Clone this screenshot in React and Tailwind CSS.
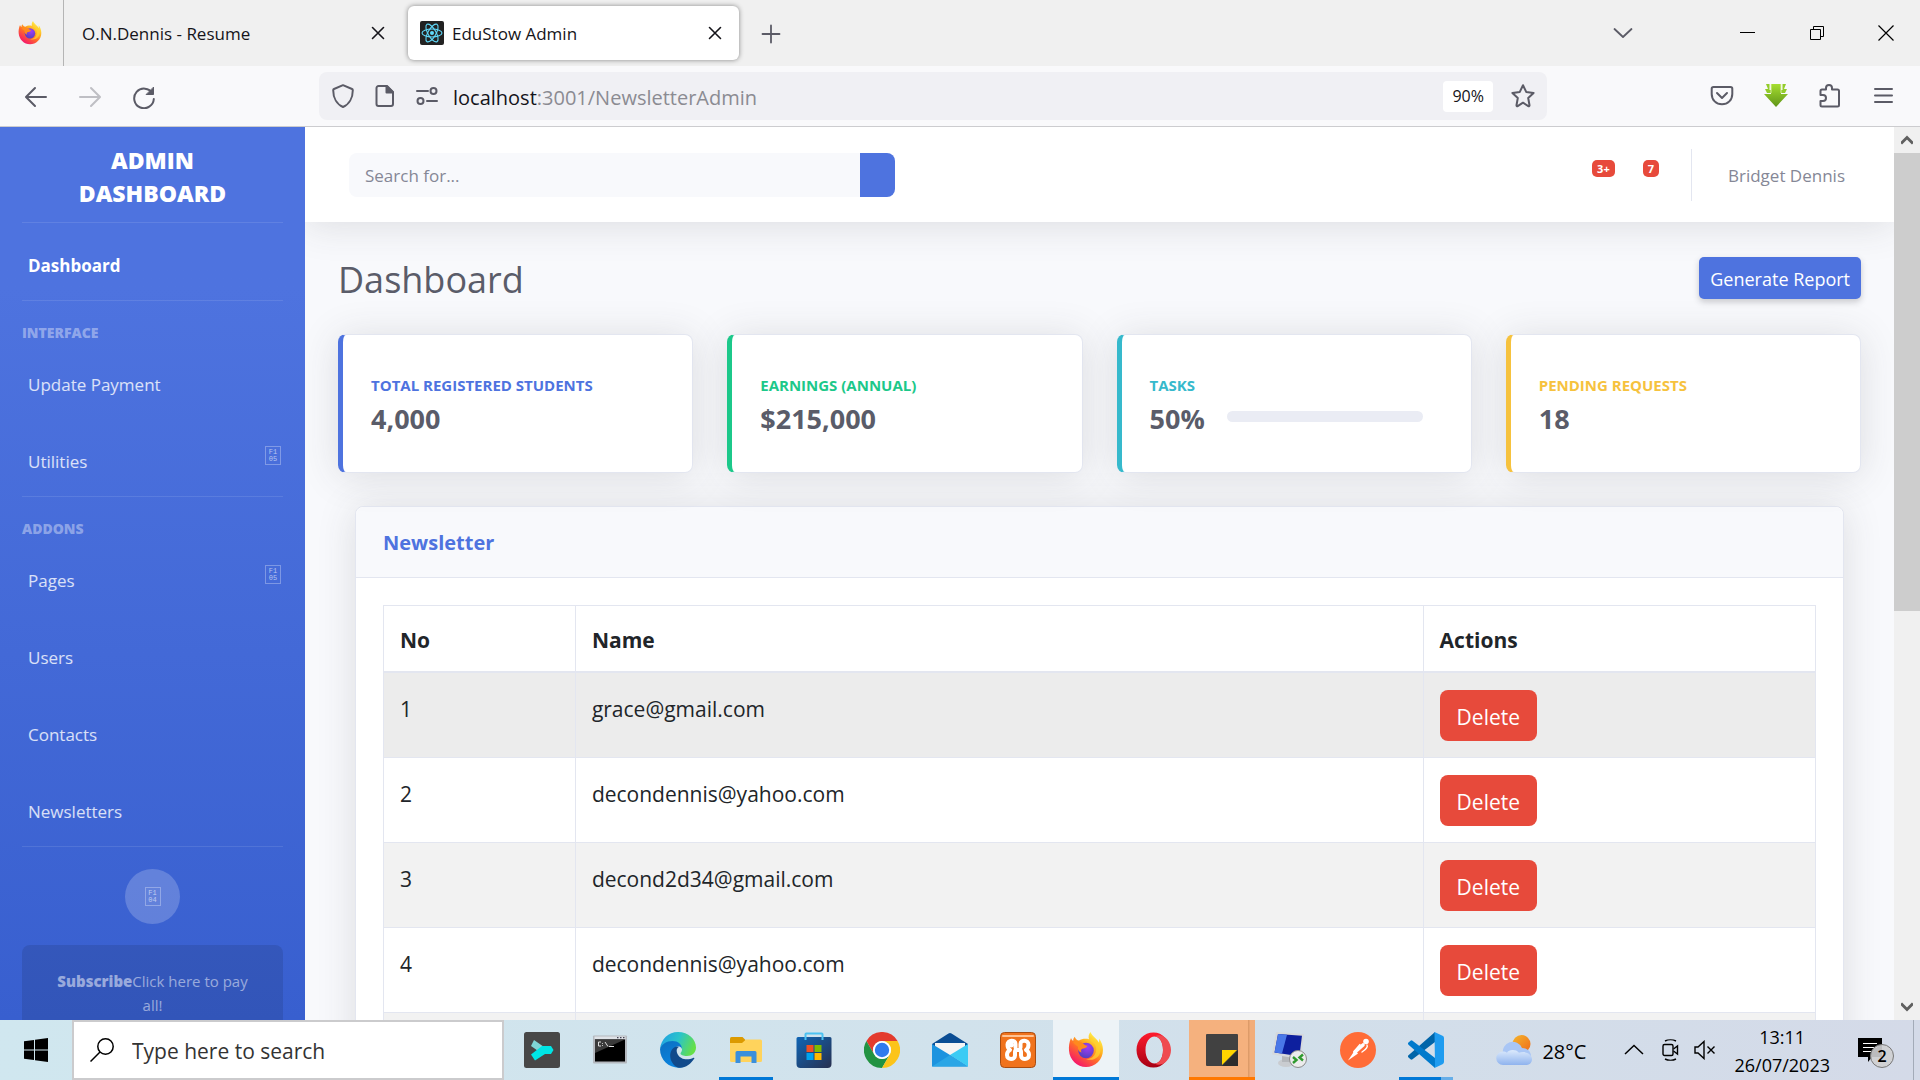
import React from "react";

/* ---------- Browser chrome icons ---------- */

function Stroke({ size = "size-6", width = 2, children, box = "0 0 24 24" }) {
  return (
    <svg viewBox={box} className={`${size} shrink-0`} fill="none" stroke="currentColor" strokeWidth={width} strokeLinecap="round" strokeLinejoin="round" aria-hidden="true">
      {children}
    </svg>
  );
}

function FirefoxLogo({ id, className }) {
  return (
    <svg viewBox="0 0 36 36" className={className} aria-hidden="true">
      <defs>
        <linearGradient id={`${id}-body`} x1="0.85" y1="0.1" x2="0.25" y2="0.95">
          <stop offset="0" stopColor="#fff44f" />
          <stop offset="0.35" stopColor="#ffb01f" />
          <stop offset="0.6" stopColor="#ff6a2b" />
          <stop offset="1" stopColor="#f5156c" />
        </linearGradient>
        <radialGradient id={`${id}-globe`} cx="0.6" cy="0.3" r="0.8">
          <stop offset="0" stopColor="#a13df5" />
          <stop offset="1" stopColor="#4b3fb8" />
        </radialGradient>
      </defs>
      <path fill={`url(#${id}-body)`} d="M22.500 0C20.600 2.200 20.200 5 21 7.200 17.500 6.300 13.500 6.800 11 8.600 9.300 8.500 7.500 7 6.700 4.800 5.600 6 5.100 7.500 5.200 9 4.200 8.300 3.400 7.300 3 6 1.300 10 .6 14.500 1 18.500 1.700 27.800 9 35 18 35s17-7.300 17-17c0-4.500-1.600-8.500-4-11.500.3 1.500.2 3-.2 4.300C29.500 6.500 24 4.600 22.500 0z" />
      <circle cx="18" cy="18.500" r="7.800" fill={`url(#${id}-globe)`} />
      <path fill="#ff8a1e" d="M5 10c3-1 7-1 9.500 1 1.200 1 2.700 2.500 5 2.800-1 2.300-3.500 2.600-5.300 3-1.500.6-1.200 2.400-.7 3.700-2.800-.6-4-3.200-3.500-5.800C8.500 13.500 6.500 12.500 5 10z" />
      <path fill="#ffd32e" opacity="0.75" d="M22.500 9c5 2 7 7 5 12-1.500 4-5 6.200-9.500 6 7 2.800 14-1.500 14.500-8.500.4-5-2-9-5-11 .8 1.500 1 2.500.8 3.500C26.500 8.500 24 7 22.500 4z" />
    </svg>
  );
}

function ReactLogo() {
  return (
    <svg viewBox="0 0 24 24" className="size-6 shrink-0" aria-hidden="true">
      <rect width="24" height="24" rx="2" fill="#222" />
      <g fill="none" stroke="#61dafb" strokeWidth="1.100">
        <ellipse cx="12" cy="12" rx="10" ry="4" />
        <ellipse cx="12" cy="12" rx="10" ry="4" transform="rotate(60 12 12)" />
        <ellipse cx="12" cy="12" rx="10" ry="4" transform="rotate(120 12 12)" />
      </g>
      <circle cx="12" cy="12" r="2" fill="#61dafb" />
    </svg>
  );
}

function CloseX() {
  return (
    <Stroke size="size-5" width={1.6} box="0 0 20 20">
      <path d="M4.500 4.500l11 11M15.500 4.500l-11 11" />
    </Stroke>
  );
}

function TabStrip() {
  return (
    <header className="flex h-[66px] shrink-0 items-center bg-[#f0f0f0] text-[17px] text-[#15141a]">
      <button aria-label="Firefox" className="flex h-full w-16 items-center justify-center border-r border-[#b5b5b5] pr-1">
        <FirefoxLogo id="ff-tab" className="size-6" />
      </button>
      <div className="flex w-[344px] items-center justify-between pl-[18px] pr-5">
        <button className="pt-0.5">O.N.Dennis - Resume</button>
        <button aria-label="Close O.N.Dennis - Resume"><CloseX /></button>
      </div>
      <div className="flex h-[54px] w-[331px] items-center rounded-md bg-white pl-3 pr-[14px] shadow-[0_0_5px_rgba(0,0,0,0.45)]">
        <button className="flex items-center gap-2">
          <ReactLogo />
          <span className="pt-0.5">EduStow Admin</span>
        </button>
        <button aria-label="Close EduStow Admin" className="ml-auto"><CloseX /></button>
      </div>
      <button aria-label="New tab" className="ml-[22px] pt-0.5 text-[#5b5b66]">
        <Stroke size="size-5" box="0 0 20 20" width={1.8}><path d="M10 1.500v17M1.500 10h17" /></Stroke>
      </button>
      <div className="ml-auto flex items-center">
        <button aria-label="List all tabs" className="mr-20 text-[#5b5b66]">
          <Stroke size="size-5" box="0 0 20 20" width={1.8}><path d="M1.500 6l8.500 8 8.500-8" /></Stroke>
        </button>
        <button aria-label="Minimise" className="flex w-[69px] justify-center">
          <svg viewBox="0 0 16 16" className="size-4" stroke="#000" aria-hidden="true"><path d="M0 7.500h15" /></svg>
        </button>
        <button aria-label="Restore" className="flex w-[69px] justify-center">
          <svg viewBox="0 0 16 16" className="size-4" fill="none" stroke="#000" aria-hidden="true"><path d="M1.500 4.500h10v10h-10zM4.500 4V1.500h10v10H12" /></svg>
        </button>
        <button aria-label="Close window" className="flex w-[69px] justify-center">
          <svg viewBox="0 0 16 16" className="size-4" fill="none" stroke="#000" strokeWidth="1.200" aria-hidden="true"><path d="M.5.500l15 15M15.500.500l-15 15" /></svg>
        </button>
      </div>
    </header>
  );
}

function Toolbar() {
  return (
    <div className="flex h-[61px] shrink-0 items-center border-b border-[#cccccf] bg-[#f9f9fb] text-[#5b5b66]">
      <div className="flex w-[319px] shrink-0 items-center gap-[30px] pt-0.5 pl-6">
        <button aria-label="Back">
          <Stroke><path d="M22 12H3M11 3l-9 9 9 9" /></Stroke>
        </button>
        <button aria-label="Forward" className="text-[#bfbfc4]">
          <Stroke><path d="M2 12h19M13 3l9 9-9 9" /></Stroke>
        </button>
        <button aria-label="Reload">
          <Stroke>
            <path d="M20.500 8.500A9.800 9.800 0 1 0 21.800 14" />
            <path d="M21.500 2.500v7h-7z" fill="currentColor" strokeWidth="1" />
          </Stroke>
        </button>
      </div>
      <div className="flex h-12 min-w-0 flex-1 items-center rounded-lg bg-[#f0f0f4] pl-3 pr-3">
        <Stroke><path d="M12 1.200l9 3.800c.5.200.8.600.8 1.200C21.800 14 18 20.500 12 23 6 20.500 2.200 14 2.200 6.200c0-.6.300-1 .8-1.200z" /></Stroke>
        <svg viewBox="0 0 24 24" className="ml-[18px] size-6 shrink-0" fill="none" stroke="currentColor" strokeWidth="2" strokeLinejoin="round" aria-hidden="true">
          <path d="M5.500 2H14l6 6v12a2 2 0 0 1-2 2H5.500a2 2 0 0 1-2-2V4a2 2 0 0 1 2-2z" />
          <path d="M13.500 2v6.500H20z" fill="currentColor" />
        </svg>
        <Stroke size="ml-[18px] size-6">
          <path d="M2 7h11M12 17h10" />
          <circle cx="18.500" cy="7" r="3" />
          <circle cx="5.500" cy="17" r="3" />
        </Stroke>
        <div className="ml-[14px] flex min-w-0 flex-1 pt-[3px] text-xl text-[#8b8b92]">
          <button className="truncate"><span className="text-[#15141a]">localhost</span>:3001/NewsletterAdmin</button>
        </div>
        <button className="h-[31px] rounded bg-white px-[9px] text-base text-[#15141a]">90%</button>
        <button aria-label="Bookmark this page" className="ml-[18px]">
          <Stroke><path d="M12 1.200l3.200 6.700 7.400 1-5.400 5.100 1.300 7.300a.8.800 0 0 1-1.200.8L12 18.700l-5.300 3.400a.8.800 0 0 1-1.200-.8l1.300-7.300L1.400 8.900l7.400-1z" /></Stroke>
        </button>
      </div>
      <div className="flex w-[373px] shrink-0 items-center justify-end gap-[30px] pr-6">
        <button aria-label="Save to Pocket">
          <Stroke>
            <path d="M3.500 3h17a1.800 1.800 0 0 1 1.800 1.800V10c0 6-4.500 10.300-10.300 10.300S1.700 16 1.700 10V4.800A1.800 1.800 0 0 1 3.500 3z" />
            <path d="M7 9l5 5 5-5" />
          </Stroke>
        </button>
        <button aria-label="Download helper">
          <svg viewBox="0 0 24 24" className="size-6" aria-hidden="true">
            <defs>
              <linearGradient id="dl" x1="0" y1="0" x2="0" y2="1"><stop offset="0" stopColor="#a6de30" /><stop offset="1" stopColor="#5f9418" /></linearGradient>
            </defs>
            <path fill="url(#dl)" d="M7 0h10v10h7L12 23 0 10h7z" />
            <path fill="#93cc2a" d="M2 0h3.500v6H7v3H3L1 5h3zM22 0h-3.500v6H17v3h4l2-4h-3z" />
            <path stroke="#e6f7bd" strokeWidth="0.800" d="M7 0v9M17 0v9" />
          </svg>
        </button>
        <button aria-label="Extensions">
          <Stroke><path d="M2.500 9V7a1.500 1.500 0 0 1 1.500-1.500h4V4a3 3 0 0 1 6 0v1.500h5.500A1.500 1.500 0 0 1 21 7v14a1.500 1.500 0 0 1-1.500 1.500H4A1.500 1.500 0 0 1 2.500 21v-4H5a3 3 0 0 0 0-6H2.500z" /></Stroke>
        </button>
        <button aria-label="Open application menu">
          <Stroke><path d="M3 5h17M3 11.500h17M3 18h17" /></Stroke>
        </button>
      </div>
    </div>
  );
}

/* ---------- Admin page ---------- */

/* Box showing the code point of a glyph the page's font lacks. */
function MissingGlyph({ code }) {
  return (
    <span className="flex h-[19px] w-4 flex-col items-center justify-center border border-white/30 font-['Liberation_Mono',monospace] text-[7px] leading-[7px] text-white/60">
      <span>F1</span>
      <span>{code}</span>
    </span>
  );
}

function Divider() {
  return <hr className="mx-[22px] border-white/10" />;
}

function NavItem({ children, arrow = false, active = false }) {
  return (
    <a href="#" className={active ? "flex h-[77px] items-center justify-between pt-2 pl-7 pr-6 text-[17px] font-bold text-white" : "flex h-[77px] items-center justify-between pt-2 pl-7 pr-6 text-[17px] text-white/80"}>
      {children}
      {arrow && <span className="pb-3"><MissingGlyph code="05" /></span>}
    </a>
  );
}

function NavHeading({ children }) {
  return <h2 className="px-[22px] pt-[23px] text-[14px] leading-[18px] font-extrabold text-white/40">{children}</h2>;
}

function Sidebar() {
  return (
    <nav className="w-[305px] shrink-0 overflow-hidden bg-linear-to-b from-[#4e73df] from-[18%] to-[#385fcf]">
      <a href="#" className="flex h-[95px] items-center justify-center px-12 pt-1 text-center text-[23px] leading-[33px] font-extrabold text-white">
        ADMIN<br />DASHBOARD
      </a>
      <Divider />
      <NavItem active>Dashboard</NavItem>
      <Divider />
      <NavHeading>INTERFACE</NavHeading>
      <NavItem>Update Payment</NavItem>
      <NavItem arrow>Utilities</NavItem>
      <Divider />
      <NavHeading>ADDONS</NavHeading>
      <NavItem arrow>Pages</NavItem>
      <NavItem>Users</NavItem>
      <NavItem>Contacts</NavItem>
      <NavItem>Newsletters</NavItem>
      <Divider />
      <div className="flex justify-center pt-[22px]">
        <button aria-label="Toggle sidebar" className="flex size-[55px] items-center justify-center rounded-full bg-white/20">
          <MissingGlyph code="04" />
        </button>
      </div>
      <div className="mx-[22px] mt-[21px] rounded-lg bg-black/10 px-6 pt-6 pb-8 text-center text-[15px] leading-6 text-white/50">
        <b className="font-extrabold">Subscribe</b>Click here to pay all!
      </div>
    </nav>
  );
}

function Topbar() {
  return (
    <div className="flex h-[95px] items-center bg-white pl-11 pr-[49px] shadow-[0_3px_38px_rgba(58,59,69,0.15)]">
      <form className="flex h-11 w-[546px]">
        <input aria-label="Search for" placeholder="Search for..." className="min-w-0 flex-1 rounded-l-lg bg-[#f8f9fc] px-4 pt-0.5 text-[17px] text-[#6e707e] outline-none placeholder:text-[#858796]" />
        <button type="button" aria-label="Search" className="w-[35px] rounded-r-lg bg-[#4e73df]" />
      </form>
      <div className="ml-auto flex items-center">
        <button className="mb-3 h-[17px] rounded-[5px] bg-[#e74a3b] px-[5px] text-[11px] leading-[17px] font-bold text-white">3+</button>
        <button className="mb-3 ml-7 h-[17px] rounded-[5px] bg-[#e74a3b] px-[5px] text-[11px] leading-[17px] font-bold text-white">7</button>
        <div className="ml-8 h-[52px] w-px bg-[#e3e6f0]" />
        <button className="ml-9 pt-0.5 text-[17px] text-[#858796]">Bridget Dennis</button>
      </div>
    </div>
  );
}

const STATS = [
  { label: "TOTAL REGISTERED STUDENTS", value: "4,000", edge: "border-l-[#4e73df]", ink: "text-[#4e73df]" },
  { label: "EARNINGS (ANNUAL)", value: "$215,000", edge: "border-l-[#1cc88a]", ink: "text-[#1cc88a]" },
  { label: "TASKS", value: "50%", edge: "border-l-[#36b9cc]", ink: "text-[#36b9cc]", bar: true },
  { label: "PENDING REQUESTS", value: "18", edge: "border-l-[#f6c23e]", ink: "text-[#f6c23e]" },
];

function StatCard({ label, value, edge, ink, bar }) {
  return (
    <section className={`${edge} flex h-[139px] flex-col justify-center rounded-lg border border-l-[5px] border-[#e3e6f0] bg-white px-7 pt-0.5 shadow-[0_3px_38px_rgba(58,59,69,0.15)]`}>
      <h2 className={`${ink} text-[15px] leading-6 font-bold`}>{label}</h2>
      <div className="mt-1 flex items-center">
        <p className="text-[27px] leading-9 font-bold text-[#5a5c69]">{value}</p>
        {bar && <div role="progressbar" aria-label="Tasks" className="mr-5 mb-1 ml-[22px] h-[11px] flex-1 rounded-md bg-[#eaecf4]" />}
      </div>
    </section>
  );
}

const ROWS = [
  { no: 1, name: "grace@gmail.com", tone: "bg-[#ececec]" },
  { no: 2, name: "decondennis@yahoo.com", tone: "bg-white" },
  { no: 3, name: "decond2d34@gmail.com", tone: "bg-[#f2f2f2]" },
  { no: 4, name: "decondennis@yahoo.com", tone: "bg-white" },
];

function Newsletter() {
  return (
    <section className="mx-[17px] mt-[33px] rounded-lg border border-[#e3e6f0] bg-white shadow-[0_3px_38px_rgba(58,59,69,0.15)]">
      <h2 className="rounded-t-lg border-b border-[#e3e6f0] bg-[#f8f9fc] px-[27px] pt-5 pb-[18px] text-xl leading-8 font-bold text-[#4e73df]">Newsletter</h2>
      <div className="p-[27px]">
        <table className="w-full table-fixed border-collapse text-[21px] leading-8 text-[#212529]">
          <colgroup>
            <col className="w-[13.4%]" />
            <col className="w-[59.2%]" />
            <col />
          </colgroup>
          <thead>
            <tr>
              {["No", "Name", "Actions"].map((h) => (
                <th key={h} scope="col" className="border border-b-2 border-[#e3e6f0] px-4 pt-[18px] pb-[15px] text-left font-bold">{h}</th>
              ))}
            </tr>
          </thead>
          <tbody>
            {ROWS.map((r) => (
              <tr key={r.no} className={r.tone}>
                <td className="border border-[#e3e6f0] px-4 pt-5 align-top">{r.no}</td>
                <td className="border border-[#e3e6f0] px-4 pt-5 align-top">{r.name}</td>
                <td className="border border-[#e3e6f0] px-4 py-4 align-top">
                  <button className="mt-px block h-[51px] rounded-lg bg-[#e74a3b] px-[17px] pt-[3px] text-white">Delete</button>
                </td>
              </tr>
            ))}
            <tr className="h-[85px] bg-[#f2f2f2]">
              <td className="border border-[#e3e6f0]" />
              <td className="border border-[#e3e6f0]" />
              <td className="border border-[#e3e6f0]" />
            </tr>
          </tbody>
        </table>
      </div>
    </section>
  );
}

function Scrollbar() {
  return (
    <div className="flex w-[26px] shrink-0 flex-col bg-[#f0f0f0] text-[#606060]">
      <div className="flex h-[26px] items-center justify-center">
        <svg viewBox="0 0 12 10" className="h-[10px] w-3" fill="none" stroke="currentColor" strokeWidth="3" aria-hidden="true"><path d="M0 8.500l6-6 6 6" /></svg>
      </div>
      <div className="flex-1">
        <div className="h-[54.4%] bg-[#cdcdcd]" />
      </div>
      <div className="flex h-[26px] items-center justify-center">
        <svg viewBox="0 0 12 10" className="h-[10px] w-3" fill="none" stroke="currentColor" strokeWidth="3" aria-hidden="true"><path d="M0 1.500l6 6 6-6" /></svg>
      </div>
    </div>
  );
}

/* ---------- Taskbar ---------- */

const icon = "size-9 shrink-0";

function TerminalIcon() {
  return (
    <svg viewBox="0 0 36 36" className={icon} aria-hidden="true">
      <rect width="36" height="36" rx="2.500" fill="#474747" />
      <path fill="#7fd6d6" d="M10 8l11.500 8-4.500 5L7 14z" />
      <path fill="#00e5e5" d="M18 14h9l2.500 4-2.500 4h-6l-10 6.500L7 22.500z" />
    </svg>
  );
}

function CmdIcon() {
  return (
    <svg viewBox="0 0 36 36" className={icon} aria-hidden="true">
      <rect x="1" y="3.500" width="34" height="28" rx="1" fill="#b4b8be" />
      <rect x="2.500" y="4.500" width="31" height="2.500" fill="#dfe3e8" />
      <rect x="3" y="7.500" width="30" height="22" fill="#000" />
      <path d="M3 7.500h30L3 21z" fill="#3a3a3a" />
      <path d="M9 10H6.500v4H9M10.500 11v.8M10.500 13.200v.8M13 10l3 4.500M17 14.500h5" fill="none" stroke="#ddd" strokeWidth="1" />
      <path d="M25 5.700h1.500M28 5.700h1.500M31 5.700h1.500" stroke="#445" strokeWidth="1.200" />
    </svg>
  );
}

function EdgeIcon() {
  return (
    <svg viewBox="0 0 36 36" className={icon} aria-hidden="true">
      <defs>
        <linearGradient id="edge-a" x1="0" y1="0.200" x2="1" y2="0.500"><stop offset="0" stopColor="#1f9fe5" /><stop offset="0.500" stopColor="#2bc4c9" /><stop offset="1" stopColor="#66e046" /></linearGradient>
        <linearGradient id="edge-b" x1="0" y1="0" x2="0.500" y2="1"><stop offset="0" stopColor="#0c6fc0" /><stop offset="1" stopColor="#0a84e0" /></linearGradient>
      </defs>
      <path fill="url(#edge-a)" d="M0 17C1 7 8.500 0 18 0c10.500 0 18 7.500 18 15.500 0 5-4 8.500-9 8.500-4 0-6.500-1.300-6.500-2.500 0-1 1.500-1.500 1.500-4 0-4-4-7-9-7-6 0-11 3-13 6.500z" />
      <path fill="url(#edge-b)" d="M0 17c1.500-4.500 6.500-8 12.500-8 5.500 0 9.500 3.500 9.500 8-1-2.300-3-3-5-2.500-3 1-5 5-3.500 10 1.500 5.500 6 9.500 10 10.500C12 38 0 30 0 17z" />
      <path fill="#114a8b" d="M12 17.500c2-2.500 5-3.500 7-2.500-2.500 1-3 4-1.500 7 3 6 10.500 6.500 16 3.800.7-.3 1.200.2.800.8C31 32 25 36.500 19 35.800 12 34.500 7.500 24 12 17.500z" />
    </svg>
  );
}

function ExplorerIcon() {
  return (
    <svg viewBox="0 0 36 36" className={icon} aria-hidden="true">
      <path fill="#dc9a00" d="M2 6.500A1.500 1.500 0 0 1 3.500 5h11l3 3v5H2z" />
      <path fill="#ffd35c" d="M2 11h12l4-3.500h14.500A1.500 1.500 0 0 1 34 9v19.500a1.500 1.500 0 0 1-1.500 1.500h-29A1.500 1.500 0 0 1 2 28.500z" />
      <path fill="#3a8fdc" d="M7.500 31V20.500a1.500 1.500 0 0 1 1.500-1.500h18a1.500 1.500 0 0 1 1.500 1.500V31h-5v-6.500h-11V31z" />
    </svg>
  );
}

function StoreIcon() {
  return (
    <svg viewBox="0 0 36 36" className={icon} aria-hidden="true">
      <defs><linearGradient id="store" x1="0" y1="0" x2="1" y2="1"><stop offset="0" stopColor="#0f65b5" /><stop offset="1" stopColor="#28304f" /></linearGradient></defs>
      <path fill="url(#store)" d="M.5 6.500A1.500 1.500 0 0 1 2 5h32a1.500 1.500 0 0 1 1.500 1.500V32a4 4 0 0 1-4 4h-27a4 4 0 0 1-4-4z" />
      <path fill="none" stroke="#4cc2f1" strokeWidth="2" d="M9.500 8V2.300A.8.800 0 0 1 10.300 1.500h15.400a.8.800 0 0 1 .8.800V8" />
      <path fill="#f25022" d="M10.500 13h7v7h-7z" /><path fill="#7fba00" d="M18.500 13h7v7h-7z" />
      <path fill="#00a4ef" d="M10.500 21h7v7h-7z" /><path fill="#ffb900" d="M18.500 21h7v7h-7z" />
    </svg>
  );
}

function ChromeIcon() {
  return (
    <svg viewBox="0 0 36 36" className={icon} aria-hidden="true">
      <path fill="#e33b2e" d="M2.400 9a18 18 0 0 1 31.200 0H18a9 9 0 0 0-7.800 13.500z" />
      <path fill="#229342" d="M2.400 9l7.800 13.500A9 9 0 0 0 25.800 22.500L18 36A18 18 0 0 1 2.400 9z" />
      <path fill="#fcc419" d="M33.600 9A18 18 0 0 1 18 36l7.800-13.500A9 9 0 0 0 18 9z" />
      <circle cx="18" cy="18" r="9" fill="#fff" />
      <circle cx="18" cy="18" r="7.200" fill="#2f7bee" />
    </svg>
  );
}

function MailIcon() {
  return (
    <svg viewBox="0 0 36 36" className={icon} aria-hidden="true">
      <path fill="#0a4d94" d="M0 12L16.500 1.500a3 3 0 0 1 3 0L36 12v4H0z" />
      <path fill="#f4f4f4" d="M3 11h30v8L18 25 3 19z" />
      <path fill="#1c93df" d="M0 12l18 11 18 11.500H0z" />
      <path fill="#3ccbf4" d="M36 12L18 23l18 11.500z" />
      <path fill="#2aa6e6" d="M0 34.500L18 23l18 11.500z" />
    </svg>
  );
}

function XamppIcon() {
  return (
    <svg viewBox="0 0 36 36" className={icon} aria-hidden="true">
      <rect x="0.500" y="0.500" width="35" height="35" rx="4" fill="#f0731d" stroke="#a84d12" />
      <path d="M3 4h30" stroke="#ffc394" strokeWidth="2" strokeLinecap="round" />
      <g fill="none" stroke="#fff" strokeWidth="4" strokeLinecap="round" strokeLinejoin="round">
        <path d="M11.500 12.500v1M15.500 15.500v-3.500c0-4.500-8-4.500-8 .5 0 2.500 1 4.500 2.500 5.500-2 1-3 3-3 5 0 5.500 8 5 8 .5v-4" />
        <path d="M20.500 15.500v-3.500c0-4.500 8-4.500 8 .5 0 2.500-1 4.500-2.500 5.500 2 1 3 3 3 5 0 5.500-8 5-8 .5v-4" />
        <path d="M15.500 18h5" />
      </g>
    </svg>
  );
}

function OperaIcon() {
  return (
    <svg viewBox="0 0 36 36" className={icon} aria-hidden="true">
      <defs><linearGradient id="opera" x1="0" y1="0" x2="0" y2="1"><stop offset="0" stopColor="#ff1b2d" /><stop offset="1" stopColor="#a70014" /></linearGradient></defs>
      <path fill="url(#opera)" fillRule="evenodd" d="M17.500 .5C27 .5 33 8 33 18s-6 17.500-15.500 17.500S.5 28 .5 18 8 .5 17.500 .5zM18.500 4.500C13.500 4.500 9.500 10 9.500 18s4 13.500 9 13.500S27 26 27 18 23.500 4.500 18.500 4.500z" />
      <path fill="#ef4a50" d="M18.500 4.500C27 0 35 9 35 18s-8 18-16.500 13.500c5 0 8.500-5.500 8.500-13.500S23.500 4.500 18.500 4.500z" />
    </svg>
  );
}

function StickyIcon() {
  return (
    <svg viewBox="0 0 36 36" className={icon} aria-hidden="true">
      <rect x="2" y="2" width="32" height="32" rx="1" fill="#414141" />
      <path fill="#ffd500" d="M18 18h15L18 33z" />
      <path fill="#2c2c2c" d="M34 18v16H18z" />
    </svg>
  );
}

function RemoteIcon() {
  return (
    <svg viewBox="0 0 36 36" className={icon} aria-hidden="true">
      <ellipse cx="14" cy="31" rx="8" ry="4" fill="#c9ccd0" />
      <path fill="#b5b8bc" d="M10 23h8v7h-8z" />
      <path fill="#d6d9dc" d="M4 0l28 2-3 25L0 22.500z" />
      <path fill="#0d1f9e" d="M6 2l24 1.700-2.600 20.500L2.500 20.500z" />
      <path fill="#4a78e8" d="M6 2l9 .7-5 18.800-7.500-1z" />
      <circle cx="26" cy="27" r="8.500" fill="#ececec" stroke="#8b8b8b" />
      <path fill="none" stroke="#2f9a2f" strokeWidth="2.400" d="M21 25l3.500 3-3.500 3M31 22.500l-3.500 3 3.500 3" />
    </svg>
  );
}

function PostmanIcon() {
  return (
    <svg viewBox="0 0 36 36" className={icon} aria-hidden="true">
      <circle cx="18" cy="18" r="18" fill="#ff6c37" />
      <path fill="none" stroke="#fff" strokeWidth="3.600" strokeLinecap="round" d="M23 13l-8 7" />
      <path fill="#fff" d="M15 18l3 3.500L8 28.500z" />
      <circle cx="26" cy="9.500" r="2.800" fill="#fff" />
      <path fill="none" stroke="#fff" strokeWidth="1.400" strokeLinecap="round" d="M27 13c1.500 2.500-2 5-5 7M14 19.500l6-7" />
    </svg>
  );
}

function VsCodeIcon() {
  return (
    <svg viewBox="0 0 36 36" className={icon} aria-hidden="true">
      <path fill="#0065a9" d="M27 0v10L4.500 27.300a1.500 1.500 0 0 1-2 0L.5 25.500a1.500 1.500 0 0 1 0-2.200z" />
      <path fill="#007acc" d="M27 36V26L4.500 8.700a1.500 1.500 0 0 0-2 0L.5 10.500a1.500 1.500 0 0 0 0 2.200z" />
      <path fill="#1f9cf0" d="M26.500 0L34.500 3.800A2.500 2.500 0 0 1 36 6v24a2.500 2.500 0 0 1-1.500 2.200L26.500 36 27 34z" />
    </svg>
  );
}

const APPS = [
  { name: "Terminal", Icon: TerminalIcon },
  { name: "Command Prompt", Icon: CmdIcon },
  { name: "Edge", Icon: EdgeIcon },
  { name: "File Explorer", Icon: ExplorerIcon, line: "bg-[#0078d7]" },
  { name: "Store", Icon: StoreIcon },
  { name: "Chrome", Icon: ChromeIcon },
  { name: "Mail", Icon: MailIcon },
  { name: "XAMPP", Icon: XamppIcon },
  { name: "Firefox", Icon: () => <FirefoxLogo id="ff-task" className={icon} />, line: "bg-[#0078d7]", wide: true, tile: "bg-white/60" },
  { name: "Opera", Icon: OperaIcon },
  { name: "Sticky Notes", Icon: StickyIcon, line: "bg-[#ff7800]", wide: true, tile: "bg-linear-to-r from-[#f5b17e] from-[90%] via-[#dc9a68] via-[90%] to-[#f2ad7a] to-[93%]" },
  { name: "Remote Desktop", Icon: RemoteIcon },
  { name: "Postman", Icon: PostmanIcon },
  { name: "Visual Studio Code", Icon: VsCodeIcon, line: "bg-linear-to-r from-[#0078d7] from-[77%] to-[#66aee8] to-[77%]" },
];

function TaskApp({ name, Icon, line, wide, tile = "" }) {
  return (
    <button aria-label={name} className="flex h-full w-[68px] shrink-0 justify-center">
      <span className={`${tile} flex h-full w-[66px] flex-col items-center`}>
        <span className="flex flex-1 items-center pt-[3px]"><Icon /></span>
        <span className={`${line ?? ""} ${wide ? "w-full" : "w-[54px]"} h-[3px]`} />
      </span>
    </button>
  );
}

function Taskbar() {
  return (
    <footer className="flex h-[60px] shrink-0 items-center bg-linear-to-r from-[#d0e7ef] via-[#d1e2ec] to-[#d4dae8] text-black">
      <button aria-label="Start" className="flex h-full w-[72px] shrink-0 items-center justify-center">
        <svg viewBox="0 0 24 24" className="size-6" aria-hidden="true">
          <path d="M0 3.300L10 2v9.500H0zM11 1.800L24 0v11.500H11zM0 12.500h10V22L0 20.700zM11 12.500h13V24l-13-1.800z" />
        </svg>
      </button>
      <label className="flex h-full w-[432px] shrink-0 items-center border-2 border-[#cbcbcd] bg-white pl-4">
        <svg viewBox="0 0 24 24" className="size-6 shrink-0" fill="none" stroke="#000" strokeWidth="1.500" aria-hidden="true">
          <circle cx="15.500" cy="8.500" r="7.700" />
          <path d="M10 14L.5 23.500" />
        </svg>
        <input aria-label="Type here to search" placeholder="Type here to search" className="ml-[18px] min-w-0 flex-1 pt-1 text-[21px] outline-none placeholder:text-[#333]" />
      </label>
      <div className="ml-1 flex h-full min-w-0 overflow-hidden">
        {APPS.map((a) => <TaskApp key={a.name} {...a} />)}
      </div>
      <div className="ml-auto flex h-full shrink-0 items-center">
        <button className="flex items-center gap-[10px] text-xl">
          <svg viewBox="0 0 36 36" className="size-9" aria-hidden="true">
            <defs>
              <linearGradient id="sun" x1="0" y1="0" x2="1" y2="1"><stop offset="0" stopColor="#f5b62c" /><stop offset="1" stopColor="#ee6a1a" /></linearGradient>
              <linearGradient id="cloud" x1="0" y1="0" x2="0" y2="1"><stop offset="0" stopColor="#dceafc" /><stop offset="1" stopColor="#8fb3ee" /></linearGradient>
            </defs>
            <circle cx="25.500" cy="12" r="9" fill="url(#sun)" />
            <path fill="#a9c6f5" d="M7 22a10 10 0 0 1 19-6c5 0 9 3 9 8l-8 6H9z" />
            <path fill="url(#cloud)" d="M7 33a6.700 6.700 0 0 1 0-13.500c1.500 0 3 .4 4 1.200 1.500-3 8.500-4 12 0 6-2 13 1 13 6.500 0 4-3 5.800-6.500 5.800z" />
          </svg>
          <span className="pt-1">28°C</span>
        </button>
        <button aria-label="Show hidden icons" className="ml-[38px]">
          <svg viewBox="0 0 20 20" className="size-5" fill="none" stroke="#000" strokeWidth="1.500" aria-hidden="true"><path d="M1 14l9-8.500 9 8.500" /></svg>
        </button>
        <button aria-label="Meet Now" className="ml-[18px]">
          <svg viewBox="0 0 18 22" className="h-[22px] w-[18px]" fill="none" stroke="#000" strokeWidth="1.400" aria-hidden="true">
            <rect x="1" y="5.500" width="10" height="11" rx="1.500" />
            <path d="M11.500 10l4-3v8l-4-3M3 2c3-1.500 8-1.500 11 0M3 20c3 1.500 8 1.500 11 0" />
          </svg>
        </button>
        <button aria-label="Volume muted" className="ml-[14px]">
          <svg viewBox="0 0 22 20" className="h-5 w-[22px]" fill="none" stroke="#000" strokeWidth="1.400" aria-hidden="true">
            <path d="M1 7h3l6-5.500v17L4 13H1zM13.500 6.500l7 7M20.500 6.500l-7 7" />
          </svg>
        </button>
        <button className="ml-[18px] pt-0.5 text-center text-lg leading-7">
          <span className="block">13:11</span>
          <span className="block">26/07/2023</span>
        </button>
        <button aria-label="Notifications" className="relative ml-7 mr-[19px] h-9 w-9">
          <svg viewBox="0 0 24 24" className="size-6" aria-hidden="true">
            <path d="M0 0h24v19H14l-4 5v-5H0z" />
            <path stroke="#fff" strokeWidth="1.200" d="M5 5.500h14M5 9.500h14M5 13.500h8" />
          </svg>
          <span className="absolute right-0 bottom-0 flex size-6 items-center justify-center rounded-full border border-[#777] bg-[#cfcfd1]/90 text-base font-semibold">2</span>
        </button>
        <div className="mr-[6px] h-full w-px bg-[#a3abb8]" />
      </div>
    </footer>
  );
}

export default function App() {
  return (
    <div className="flex h-screen flex-col overflow-hidden bg-white font-['Open_Sans','Noto_Sans',sans-serif]">
      <TabStrip />
      <Toolbar />
      <div className="flex min-h-0 flex-1">
        <Sidebar />
        <div className="min-w-0 flex-1 overflow-hidden bg-[#f8f9fc]">
          <Topbar />
          <main className="px-[33px] pt-[35px]">
            <div className="flex items-center justify-between">
              <h1 className="pt-1 text-4xl leading-[38px] text-[#5a5c69]">Dashboard</h1>
              <button className="h-[42px] rounded-[5px] bg-[#4e73df] px-[11px] pt-0.5 text-lg text-white shadow-[0_3px_6px_rgba(58,59,69,0.25)]">Generate Report</button>
            </div>
            <div className="mt-[35px] grid grid-cols-4 gap-[34px]">
              {STATS.map((s) => <StatCard key={s.label} {...s} />)}
            </div>
            <Newsletter />
          </main>
        </div>
        <Scrollbar />
      </div>
      <Taskbar />
    </div>
  );
}
